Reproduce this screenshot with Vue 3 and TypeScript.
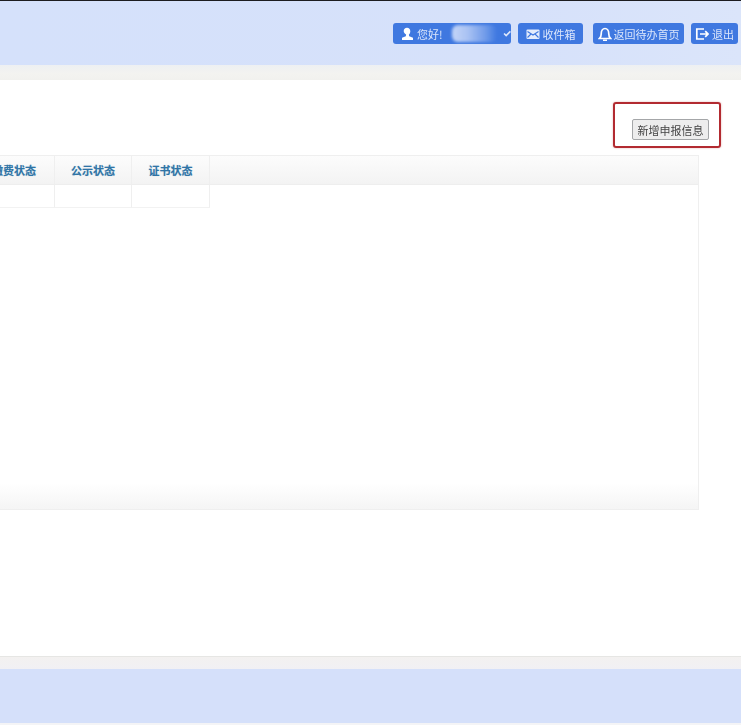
<script setup lang="ts">
const columns = ['公示状态', '证书状态']
</script>

<template>
  <div class="page">
    <header class="top">
      <div class="tool user">
        <svg class="ico" viewBox="0 0 14 14"><path d="M7 .8c2 0 3.300 1.500 3.300 3.500 0 1.400-.6 2.600-1.400 3.300l.3 1.600 3.800 1.500V13H2v-2.300l3.800-1.500.3-1.600C5.300 6.900 3.700 5.700 3.700 4.300 3.700 2.300 5 .8 7 .8z" /></svg>
        <span>您好!</span>
        <span class="name"></span>
        <svg class="chev" viewBox="0 0 8 6"><path d="M1 3l2 2 4-4" /></svg>
      </div>
      <div class="tool inbox">
        <svg class="ico mail" viewBox="0 0 14 14"><rect x="0.500" y="2.500" width="13" height="9.500" rx="1" /><path class="cut" d="M1.500 4.500L7 8l5.500-3.500M1.500 10.500L5 7M12.500 10.500L9 7" /></svg>
        <span>收件箱</span>
      </div>
      <div class="tool back">
        <svg class="ico line" viewBox="0 0 14 14"><path d="M1.500 11.500c1.200-1 1.700-2.400 1.700-4.500C3.200 3.800 4.800 1.500 7 1.500s3.800 2.300 3.800 5.500c0 2.100.5 3.500 1.700 4.500z" /><path d="M5 13.300h4" /></svg>
        <span>返回待办首页</span>
      </div>
      <div class="tool quit">
        <svg class="ico line" viewBox="0 0 14 14"><path d="M9 2H1.800v10H9" /><path d="M5 7h8M10.200 4.200L13 7l-2.800 2.800" /></svg>
        <span>退出</span>
      </div>
    </header>
    <div class="band"></div>

    <main class="content">
      <div class="action-row">
        <div class="highlight">
          <button class="add" type="button">新增申报信息</button>
        </div>
      </div>
      <section class="table">
        <div class="head">
          <div class="cell first"><span>缴费状态</span></div>
          <div v-for="c in columns" :key="c" class="cell">{{ c }}</div>
        </div>
        <div class="row">
          <div class="cell"></div>
          <div class="cell"></div>
          <div class="cell"></div>
        </div>
        <div class="fill"></div>
        <div class="foot"></div>
      </section>
    </main>

    <footer class="bottom-band"></footer>
    <div class="bottom"></div>
  </div>
</template>

<style scoped>
.page {
  width: 741px;
  height: 725px;
  overflow: hidden;
  display: flex;
  flex-direction: column;
  background: #fff;
  font-family: "Noto Sans CJK SC", "Liberation Sans", sans-serif;
}
.top {
  height: 65px;
  box-sizing: border-box;
  border-top: 1px solid #1c1c20;
  background: linear-gradient(90deg, #d5e1fb 0%, #d6e1fa 70%, #dbe5fa 100%);
  display: flex;
  justify-content: flex-end;
  align-items: flex-start;
  padding: 22px 3px 0 0;
}
.tool {
  height: 21px;
  margin-left: 7px;
  box-sizing: border-box;
  border-radius: 3px;
  background: #3f78e0;
  color: #dbe6fb;
  font-size: 11px;
  display: flex;
  align-items: center;
  justify-content: center;
  gap: 3px;
  filter: blur(0.6px);
  white-space: nowrap;
}
.user { width: 118px; justify-content: flex-start; padding-left: 7px; }
.inbox { width: 65px; margin-right: 3px; gap: 3px; }
.back { width: 91px; gap: 2px; }
.quit { width: 47px; }
.ico { width: 14px; height: 14px; fill: #fff; flex: none; }
.ico.line { fill: none; stroke: #fff; stroke-width: 1.700; }
.ico.mail { fill: #e4ecfc; }
.cut { fill: none; stroke: #3f78e0; stroke-width: 1.100; }
.name {
  width: 48px;
  height: 17px;
  margin-left: 6px;
  border-radius: 6px;
  background: linear-gradient(90deg, #c4d5f7 0%, #a9c2f3 35%, #6f9ae9 75%, #3f78e0 100%);
  filter: blur(1.800px);
}
.chev { width: 9px; height: 7px; margin-left: 3px; fill: none; stroke: #dfe8fb; stroke-width: 1.500; }
.band {
  height: 15px;
  background: linear-gradient(#eef0f2, #f3f3f0 60%, #f1f1ee);
}
.content { flex: 1; min-height: 0; background: #fff; }
.action-row {
  display: flex;
  justify-content: flex-end;
  padding: 22px 20px 0 0;
}
.highlight {
  width: 108px;
  height: 46px;
  box-sizing: border-box;
  border: 2px solid #b22a30;
  border-radius: 3px;
  box-shadow: 0 0 2px rgba(190, 60, 60, 0.45);
  display: flex;
  justify-content: flex-end;
  align-items: flex-end;
  padding: 0 10px 6px 0;
  filter: blur(0.5px);
}
.add {
  width: 77px;
  height: 21px;
  padding: 0;
  border: 1px solid #a4a6a8;
  border-radius: 2px;
  background: #ededed;
  color: #444;
  font-family: inherit;
  font-size: 11px;
}
.table {
  width: 699px;
  height: 355px;
  margin-top: 7px;
  box-sizing: border-box;
  border: 1px solid #efefef;
  border-left: 0;
  display: flex;
  flex-direction: column;
}
.head, .row {
  display: grid;
  grid-template-columns: 55px 77px 78px;
  flex: none;
}
.head {
  height: 28px;
  background: linear-gradient(#fcfcfc, #f3f3f3);
  border-bottom: 1px solid #eeeeee;
}
.row { height: 23px; }
.cell {
  border-right: 1px solid #efefef;
  font-size: 11px;
  font-weight: 700;
  color: #2f74a6;
  display: flex;
  align-items: center;
  justify-content: center;
  white-space: nowrap;
  overflow: hidden;
}
.cell > span, .head .cell { text-shadow: 0 0 1px rgba(47, 116, 166, 0.35); }
.head .first { justify-content: flex-end; padding-right: 18px; }
.first span { flex: none; }
.row .cell { border-bottom: 1px solid #f2f2f2; }
.fill { flex: 1; }
.foot {
  height: 26px;
  flex: none;
  background: linear-gradient(#fff, #f5f5f5);
}
.bottom-band {
  height: 13px;
  flex: none;
  border-top: 1px solid #e6e6e4;
  box-sizing: border-box;
  background: linear-gradient(#f3f1f0, #f1f0f4);
}
.bottom {
  height: 56px;
  flex: none;
  background: #d5e0fa;
  border-bottom: 2px solid #f4f4f6;
  box-sizing: border-box;
}
</style>
